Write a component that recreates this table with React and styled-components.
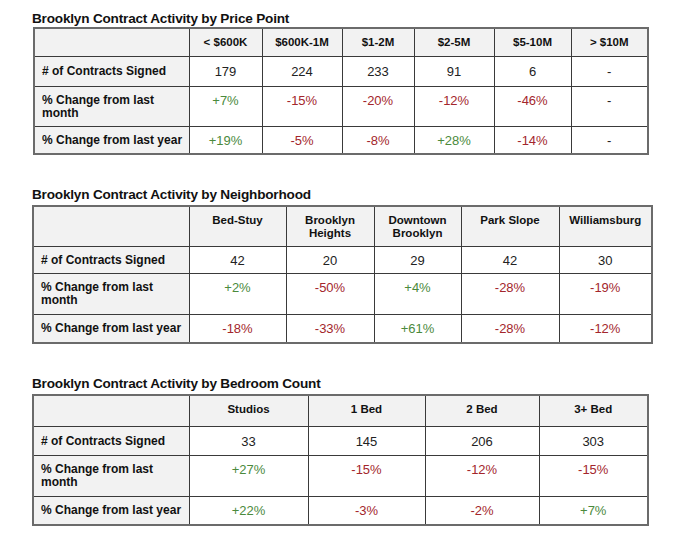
import React from "react";
import styled, { createGlobalStyle } from "styled-components";

const Global = createGlobalStyle`
  html, body { margin: 0; padding: 0; background: #fff; }
  body { font-family: "Liberation Sans", Arial, sans-serif; color: #1a1a1a; }
`;

const Page = styled.div`
  padding: 11px 0 0 32px;
  display: flex;
  flex-direction: column;
  gap: 32px;
`;

const Section = styled.section`
  display: flex;
  flex-direction: column;
  gap: ${(p) => p.$gap}px;
`;

const Title = styled.h2`
  margin: 0;
  font-size: 13.6px;
  line-height: 16px;
  font-weight: 700;
  color: #111;
  letter-spacing: -0.2px;
`;

const Table = styled.table`
  border-collapse: collapse;
  table-layout: fixed;
  border: 2px solid #6b6b6b;
  margin-left: ${(p) => p.$indent || 0}px;
`;

const Head = styled.th`
  background: #f2f2f2;
  border: 1px solid #3a3a3a;
  font-size: 11.5px;
  font-weight: 700;
  line-height: 13px;
  padding: 7px 6px ${(p) => p.$pb}px;
  text-align: center;
  vertical-align: top;
  color: #111;
`;

const Label = styled.th`
  background: #f2f2f2;
  border: 1px solid #3a3a3a;
  font-size: 12px;
  font-weight: 700;
  line-height: 13px;
  padding: ${(p) => p.$pt}px 6px ${(p) => p.$pb}px 7px;
  text-align: left;
  vertical-align: top;
  color: #111;
`;

const Cell = styled.td`
  border: 1px solid #3a3a3a;
  font-size: 13px;
  line-height: 14px;
  padding: ${(p) => p.$pt}px 4px 4px;
  text-align: center;
  vertical-align: top;
  color: ${(p) => (p.$tone === "up" ? "#4b8a3c" : p.$tone === "down" ? "#a3262c" : "#222")};
`;

const tone = (v) => (v.startsWith("+") ? "up" : v.startsWith("-") && v !== "-" ? "down" : "none");

const tables = [
  {
    title: "Brooklyn Contract Activity by Price Point",
    indent: 1,
    gap: 0,
    headPad: 7,
    rowPads: [
      [8, 8],
      [7, 6],
      [7, 6],
    ],
    widths: [155, 73, 80, 72, 80, 77, 77],
    heads: ["< $600K", "$600K-1M", "$1-2M", "$2-5M", "$5-10M", "> $10M"],
    rows: [
      ["179", "224", "233", "91", "6", "-"],
      ["+7%", "-15%", "-20%", "-12%", "-46%", "-"],
      ["+19%", "-5%", "-8%", "+28%", "-14%", "-"],
    ],
  },
  {
    title: "Brooklyn Contract Activity by Neighborhood",
    indent: 0,
    gap: 2,
    headPad: 6,
    rowPads: [
      [7, 6],
      [7, 7],
      [7, 7],
    ],
    widths: [156, 97, 88, 87, 98, 93],
    heads: ["Bed-Stuy", "Brooklyn Heights", "Downtown Brooklyn", "Park Slope", "Williamsburg"],
    rows: [
      ["42", "20", "29", "42", "30"],
      ["+2%", "-50%", "+4%", "-28%", "-19%"],
      ["-18%", "-33%", "+61%", "-28%", "-12%"],
    ],
  },
  {
    title: "Brooklyn Contract Activity by Bedroom Count",
    indent: 0,
    gap: 2,
    headPad: 10,
    rowPads: [
      [8, 7],
      [7, 7],
      [7, 7],
    ],
    widths: [156, 119, 117, 114, 109],
    heads: ["Studios", "1 Bed", "2 Bed", "3+ Bed"],
    rows: [
      ["33", "145", "206", "303"],
      ["+27%", "-15%", "-12%", "-15%"],
      ["+22%", "-3%", "-2%", "+7%"],
    ],
  },
];

const labels = ["# of Contracts Signed", "% Change from last month", "% Change from last year"];

const HeadText = styled.span`
  display: inline-block;
  max-width: 78px;
`;

function DataTable({ t }) {
  const total = t.widths.reduce((a, b) => a + b, 0);
  return (
    <Section $gap={t.gap}>
      <Title>{t.title}</Title>
      <Table $indent={t.indent} style={{ width: total }}>
        <colgroup>
          {t.widths.map((w, i) => (
            <col key={i} style={{ width: w }} />
          ))}
        </colgroup>
        <thead>
          <tr>
            <Head $pb={t.headPad} />
            {t.heads.map((h) => (
              <Head key={h} $pb={t.headPad}>
                <HeadText>{h}</HeadText>
              </Head>
            ))}
          </tr>
        </thead>
        <tbody>
          {t.rows.map((r, ri) => (
            <tr key={ri}>
              <Label $pt={t.rowPads[ri][0]} $pb={t.rowPads[ri][1]}>
                {labels[ri]}
              </Label>
              {r.map((v, ci) => (
                <Cell key={ci} $pt={t.rowPads[ri][0]} $tone={tone(v)}>
                  {v}
                </Cell>
              ))}
            </tr>
          ))}
        </tbody>
      </Table>
    </Section>
  );
}

export default function App() {
  return (
    <>
      <Global />
      <Page>
        {tables.map((t) => (
          <DataTable key={t.title} t={t} />
        ))}
      </Page>
    </>
  );
}
